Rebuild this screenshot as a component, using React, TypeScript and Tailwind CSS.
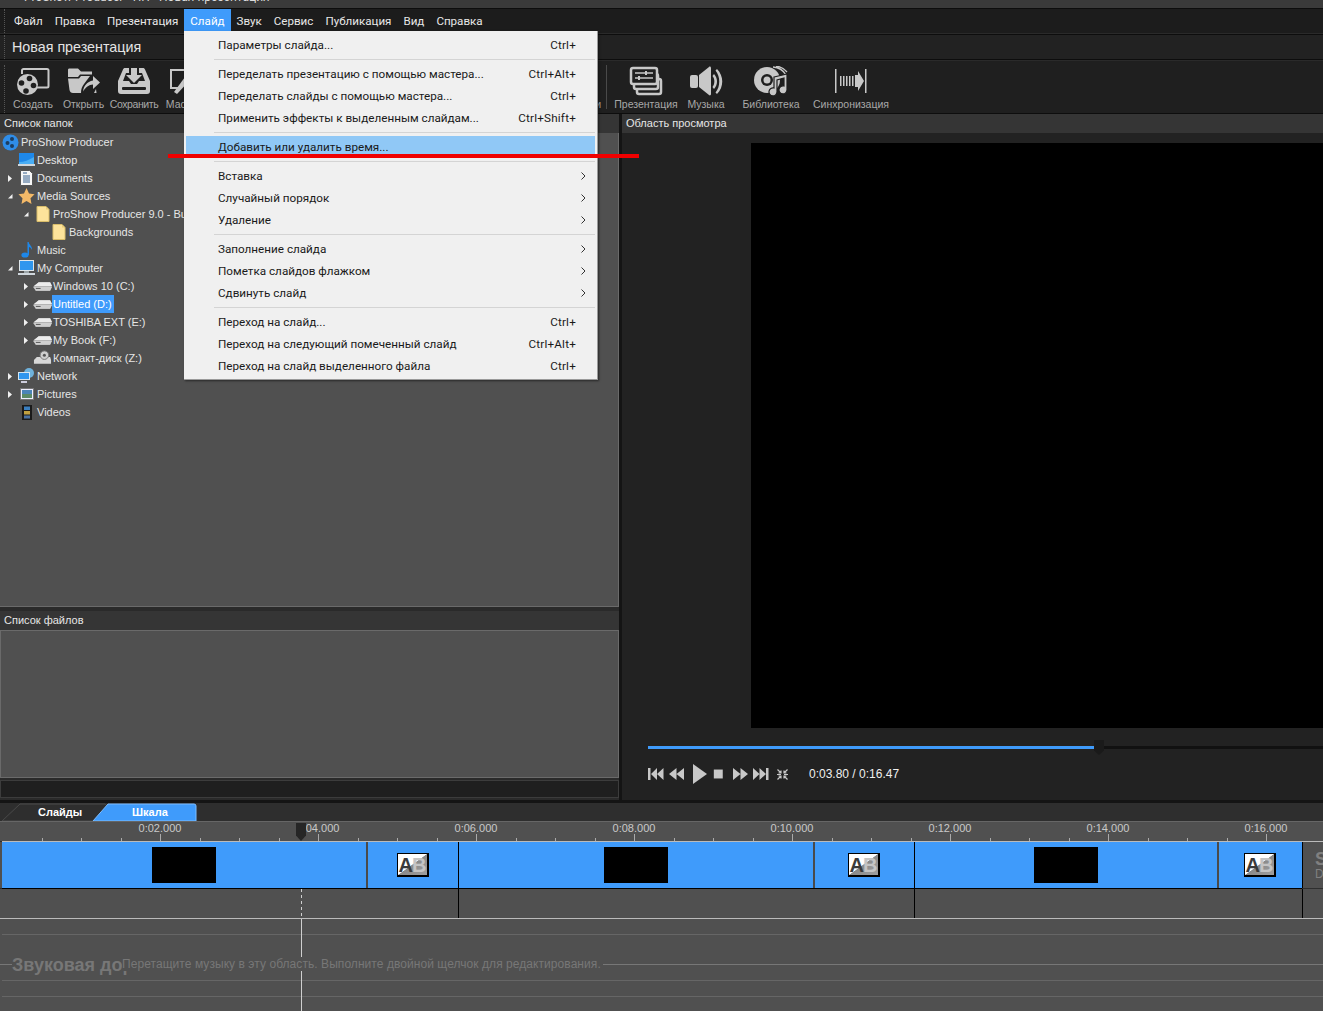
import React from "react";

const SANS = "font-['Liberation_Sans',Arial,sans-serif]";
const UI = "font-['Roboto',sans-serif]";

function Grip() {
  return <div className="ml-[4px] h-full w-[3px] shrink-0 border-l border-dotted border-[#555]" />;
}

const menuTop = ["Файл", "Правка", "Презентация", "Слайд", "Звук", "Сервис", "Публикация", "Вид", "Справка"];

type MI = { t: string; k?: string; sub?: boolean; hl?: boolean } | "sep";
const menuItems: MI[] = [
  { t: "Параметры слайда...", k: "Ctrl+" },
  "sep",
  { t: "Переделать презентацию с помощью мастера...", k: "Ctrl+Alt+" },
  { t: "Переделать слайды с помощью мастера...", k: "Ctrl+" },
  { t: "Применить эффекты к выделенным слайдам...", k: "Ctrl+Shift+" },
  "sep",
  { t: "Добавить или удалить время...", hl: true },
  "sep",
  { t: "Вставка", sub: true },
  { t: "Случайный порядок", sub: true },
  { t: "Удаление", sub: true },
  "sep",
  { t: "Заполнение слайда", sub: true },
  { t: "Пометка слайдов флажком", sub: true },
  { t: "Сдвинуть слайд", sub: true },
  "sep",
  { t: "Переход на слайд...", k: "Ctrl+" },
  { t: "Переход на следующий помеченный слайд", k: "Ctrl+Alt+" },
  { t: "Переход на слайд выделенного файла", k: "Ctrl+" },
];

function IconCreate() {
  return (
    <svg width="36" height="30" viewBox="0 0 36 30" fill="none">
      <path d="M7 8V4.500c0-.8.700-1.500 1.500-1.500H32c.8 0 1.500.7 1.500 1.500V20c0 .8-.7 1.500-1.500 1.500H22" stroke="#c8c8c8" strokeWidth="2" />
      <circle cx="12.500" cy="18.500" r="10.500" fill="#c8c8c8" />
      <g fill="#1f1f1f">
        <circle cx="14.500" cy="12.500" r="2.800" />
        <circle cx="18.500" cy="19.500" r="2.800" />
        <circle cx="11" cy="25" r="2.800" />
        <circle cx="6.500" cy="17" r="2.800" />
      </g>
    </svg>
  );
}
function IconOpen() {
  return (
    <svg width="34" height="28" viewBox="0 0 34 28" fill="#c8c8c8">
      <path d="M1 3c0-1 .5-1.500 1.500-1.500H11l3 3h11v3H13L11 10H1z" />
      <path d="M1 11.500h11l2-2.500h9l-6 8c-2 2.500-3 5-3 9H6c-2 0-3-1-3.500-3z" />
      <path d="M16 24.500c.5-5 4-10 10-11V9l7 6.500-7 6.500v-4.500c-4 0-7.500 3-10 7z" />
      <path d="M19 26h8l2-4 .5 4z" />
    </svg>
  );
}
function IconSave() {
  return (
    <svg width="32" height="28" viewBox="0 0 32 28" fill="#c8c8c8">
      <path d="M7 1h4v5H8L5 14h6l2 3h6l2-3h6l-3-8h-3V1h4c1 0 1.500.5 2 1.500L32 14v10c0 2-1 3-3 3H3c-2 0-3-1-3-3V14l5-11.500C5.500 1.500 6 1 7 1z" />
      <path d="M13 1h6v7h5l-8 8-8-8h5z" />
      <rect x="4" y="20" width="24" height="3" rx="1" fill="#1f1f1f" />
    </svg>
  );
}
function IconMaster() {
  return (
    <svg width="32" height="28" viewBox="0 0 32 28" fill="none">
      <path d="M10 21H3V3h24v5" stroke="#c8c8c8" strokeWidth="2" />
      <path d="M9 27l-3-2 11-15 5 3z" fill="#c8c8c8" />
      <path d="M18 8l3-5 5 3-3 5z" fill="#c8c8c8" />
    </svg>
  );
}
function IconShow() {
  return (
    <svg width="34" height="30" viewBox="0 0 34 30" fill="none" stroke="#c8c8c8" strokeWidth="2">
      <rect x="8" y="13" width="24" height="15" rx="2" strokeWidth="2.5" />
      <rect x="5" y="8" width="24" height="15" rx="2" fill="#1f1f1f" strokeWidth="2.5" />
      <rect x="2" y="2" width="26" height="16" rx="2" fill="#1f1f1f" strokeWidth="2.5" />
      <path d="M6 7h18M6 12h18" strokeWidth="1.5" />
      <path d="M17 5v4M10 10v4" strokeWidth="2" />
    </svg>
  );
}
function IconMusic() {
  return (
    <svg width="34" height="30" viewBox="0 0 34 30" fill="#c8c8c8">
      <rect x="1" y="9" width="8" height="13" rx="2" />
      <path d="M10 9l10-8c1-1 2 0 2 1v26c0 1-1 2-2 1l-10-8z" />
      <path d="M25 8c4 4 4 11 0 15l-1.500-2c2.500-3 2.500-8 0-11z" />
      <path d="M28 3c7 7 7 18 0 25l-1.500-1.500c5-6 5-16 0-22z" />
    </svg>
  );
}
function IconLib() {
  return (
    <svg width="34" height="30" viewBox="0 0 34 30">
      <circle cx="13" cy="14" r="13" fill="#c8c8c8" />
      <circle cx="13" cy="14" r="6" fill="#1f1f1f" />
      <circle cx="13" cy="14" r="3.500" fill="#c8c8c8" />
      <path d="M19 1a16 16 0 0 1 13 8M22 0a17 17 0 0 1 11 6" stroke="#c8c8c8" strokeWidth="1.300" fill="none" />
      <path d="M20 11l13-3v16a4 4 0 1 1-3-4v-8l-7 2v12a4 4 0 1 1-3-4z" fill="#c8c8c8" stroke="#1f1f1f" strokeWidth="1.200" />
    </svg>
  );
}
function IconSync() {
  return (
    <svg width="34" height="28" viewBox="0 0 34 28" fill="#c8c8c8">
      <rect x="1" y="2" width="1.500" height="24" />
      <rect x="31" y="2" width="1.500" height="24" />
      <path d="M6 9h1.500v10H6zM9 9h1.500v10H9zM12 9h1.500v10H12zM15 9h1.500v10H15zM18 9h1.500v10H18z" />
      <path d="M21 8h3V4l6 10-6 10v-4h-3z" />
    </svg>
  );
}

function Tool({ w, label, tight, children }: { w: string; label: string; tight?: boolean; children: React.ReactNode }) {
  return (
    <div className={`${w} shrink-0 flex flex-col items-center`}>
      <div className="h-[32px] flex items-center justify-center">{children}</div>
      <div className={`${SANS} text-[10.5px] leading-[14px] text-[#a8a8a8] whitespace-nowrap ${tight ? "tracking-[-0.4px]" : ""}`}>{label}</div>
    </div>
  );
}

function Folder() {
  return (
    <svg width="14" height="16" viewBox="0 0 14 16">
      <path d="M1 .5h9l3 3v12H1z" fill="#fde39b" stroke="#d9bd6a" />
      <path d="M10 .5v3h3" fill="#e8cc78" />
    </svg>
  );
}
function Drive() {
  return (
    <svg width="20" height="11" viewBox="0 0 20 11">
      <path d="M0 6L6 1h12l2 4-2 5H3z" fill="#b4b4b4" />
      <path d="M6 1h12l2 4H1z" fill="#ececec" />
      <path d="M1 6h19l-2 4H3z" fill="#cfcfcf" />
      <rect x="3" y="7" width="5" height="1" fill="#555" />
    </svg>
  );
}

const TreeIcons: Record<string, React.ReactNode> = {
  logo: (
    <svg width="17" height="17" viewBox="0 0 17 17">
      <circle cx="8.500" cy="8.500" r="8" fill="#2f8de8" />
      <circle cx="10" cy="5" r="2" fill="#1c3d60" />
      <circle cx="5.500" cy="9" r="2" fill="#1c3d60" />
      <circle cx="10" cy="12" r="2" fill="#1c3d60" />
    </svg>
  ),
  desktop: (
    <svg width="17" height="14" viewBox="0 0 17 14">
      <rect x="1" y="0" width="15" height="11" fill="#1e88ea" />
      <rect x="0" y="11" width="17" height="2" fill="#cfd6dc" />
      <path d="M1 9c5 0 10-2 15-5v7H1z" fill="#49aef5" />
    </svg>
  ),
  doc: (
    <svg width="13" height="16" viewBox="0 0 13 16">
      <path d="M.5.500h9l3 3v12H.500z" fill="#f7f7f7" stroke="#555" />
      <path d="M3 3h4M3 6h7M3 8h7M3 10h7M3 12h7" stroke="#36608e" />
    </svg>
  ),
  star: (
    <svg width="17" height="16" viewBox="0 0 17 16">
      <path d="M8.500 0l2.500 5.500 5.500.700-4 4 1 5.800-5-3-5 3 1-5.800-4-4 5.500-.700z" fill="#f3b968" />
    </svg>
  ),
  note: (
    <svg width="12" height="16" viewBox="0 0 12 16">
      <ellipse cx="4" cy="13" rx="3.600" ry="2.600" fill="#1e88ea" />
      <path d="M6.500 13V0h1.200c.3 3 3.800 4 3.300 8-.6-2-2.500-3-3-3v8z" fill="#1e88ea" />
    </svg>
  ),
  pc: (
    <svg width="17" height="16" viewBox="0 0 17 16">
      <rect x="1" y="0" width="15" height="11" fill="#dfe6ea" />
      <rect x="2" y="1" width="13" height="9" fill="#2f96ee" />
      <rect x="6" y="11" width="5" height="2" fill="#9ba4a8" />
      <rect x="0" y="13" width="17" height="2" fill="#cfd6dc" />
    </svg>
  ),
  cd: (
    <svg width="20" height="16" viewBox="0 0 20 16">
      <path d="M1 10l3-3h14l1 3v4H1z" fill="#d8d8d8" />
      <circle cx="12" cy="5" r="4.500" fill="#cfcfcf" stroke="#777" />
      <circle cx="12" cy="5" r="1.600" fill="#555" />
    </svg>
  ),
  net: (
    <svg width="17" height="16" viewBox="0 0 17 16">
      <circle cx="11" cy="5" r="5" fill="#6fb2dc" />
      <rect x="0" y="4" width="12" height="8" fill="#d6e6f0" />
      <rect x="1" y="5" width="10" height="6" fill="#2f96ee" />
      <rect x="3" y="13" width="6" height="2" fill="#ccd" />
    </svg>
  ),
  pic: (
    <svg width="14" height="12" viewBox="0 0 14 12">
      <rect x=".5" y=".5" width="13" height="11" fill="#eef" stroke="#777" />
      <rect x="2" y="2" width="10" height="4" fill="#4b84b8" />
      <rect x="2" y="6" width="10" height="4" fill="#5c8a68" />
    </svg>
  ),
  vid: (
    <svg width="10" height="15" viewBox="0 0 10 15">
      <rect width="10" height="15" fill="#1a1a1a" />
      <rect x="2" y="1.500" width="6" height="3.500" fill="#3a7fc0" />
      <rect x="2" y="6" width="6" height="3.500" fill="#c0a040" />
      <rect x="2" y="10.500" width="6" height="3" fill="#4a70a0" />
    </svg>
  ),
};

type Row = { d: number; a?: "r" | "d"; i: React.ReactNode; t: string; sel?: boolean };
const tree: Row[] = [
  { d: 0, i: TreeIcons.desktop, t: "Desktop" },
  { d: 0, a: "r", i: TreeIcons.doc, t: "Documents" },
  { d: 0, a: "d", i: TreeIcons.star, t: "Media Sources" },
  { d: 1, a: "d", i: <Folder />, t: "ProShow Producer 9.0 - Build 3797" },
  { d: 2, i: <Folder />, t: "Backgrounds" },
  { d: 0, i: TreeIcons.note, t: "Music" },
  { d: 0, a: "d", i: TreeIcons.pc, t: "My Computer" },
  { d: 1, a: "r", i: <Drive />, t: "Windows 10 (C:)" },
  { d: 1, a: "r", i: <Drive />, t: "Untitled (D:)", sel: true },
  { d: 1, a: "r", i: <Drive />, t: "TOSHIBA EXT (E:)" },
  { d: 1, a: "r", i: <Drive />, t: "My Book (F:)" },
  { d: 1, i: TreeIcons.cd, t: "Компакт-диск (Z:)" },
  { d: 0, a: "r", i: TreeIcons.net, t: "Network" },
  { d: 0, a: "r", i: TreeIcons.pic, t: "Pictures" },
  { d: 0, i: TreeIcons.vid, t: "Videos" },
];

function Arrow({ a }: { a?: "r" | "d" }) {
  return (
    <div className="w-[9px] h-[18px] flex items-center justify-start shrink-0">
      {a === "r" && (
        <svg width="5" height="7" viewBox="0 0 5 7"><path d="M0 0l4 3.500L0 7z" fill="#f0f0f0" /></svg>
      )}
      {a === "d" && (
        <svg width="5" height="5" viewBox="0 0 5 5"><path d="M4.500 0v4.500H0z" fill="#f0f0f0" /></svg>
      )}
    </div>
  );
}

function TreeRow({ r }: { r: Row }) {
  const ml = r.d === 0 ? "pl-[8px]" : r.d === 1 ? "pl-[24px]" : "pl-[32px]";
  const iconBox = r.d === 2 ? "ml-[8px]" : "";
  return (
    <div className={`h-[18px] flex items-center ${ml}`}>
      <Arrow a={r.a} />
      <div className={`w-[19px] h-[18px] flex items-center justify-center shrink-0 ${iconBox}`}>{r.i}</div>
      <div className={`h-[18px] leading-[18px] px-[1px] whitespace-nowrap ${r.sel ? "bg-[#3f9bfb] pr-[2px] text-white" : "text-[#e6e6e6]"}`}>{r.t}</div>
    </div>
  );
}

function Ctl({ d, w = 16 }: { d: string; w?: number }) {
  return (
    <svg width={w} height="16" viewBox="0 0 16 16" fill="#c8c8c8"><path d={d} /></svg>
  );
}

function AB() {
  return (
    <div className="w-[32px] h-[24px] border border-black border-r-2 border-b-2 relative overflow-hidden bg-[linear-gradient(to_bottom_right,#ffffff_0%,#ffffff_49%,#8a8a8a_51%,#a0a0a0_100%)] flex items-center justify-center">
      <span className={`${SANS} font-bold text-[20px] leading-none text-[#3a3a3a]`}>A</span>
      <span className={`${SANS} font-bold text-[20px] leading-none ml-[-1px] text-[#c4c4c4]`}>B</span>
    </div>
  );
}

function Slide({ w, th, tr, trBox }: { w: string; th: string; tr: string; trBox: string }) {
  return (
    <>
      <div className={`${w} h-full shrink-0 flex items-center bg-[#3f9bfb] ${th}`}>
        <div className="w-[64px] h-[36px] bg-black" />
      </div>
      <div className="w-[2px] h-full bg-[#4a4a4a] shrink-0" />
      <div className={`${tr} h-full shrink-0 flex items-center bg-[#3f9bfb] ${trBox}`}>
        <AB />
      </div>
    </>
  );
}

const tickXs = Array.from({ length: 33 }, (_, i) => 2.5 + i * 39.5).slice(1);

export default function App() {
  return (
    <div className={`relative w-[1323px] h-[1011px] overflow-hidden bg-[#2a2a2a] ${SANS} text-[11px]`}>
      {/* title */}
      <div className="h-[8px] bg-[#3a3a3a] overflow-hidden relative">
        <div className={`${UI} absolute left-[24px] top-[-12px] text-[12px] leading-[18px] text-[#dcdcdc] whitespace-nowrap`}>ProShow Producer - ПП - Новая презентация</div>
      </div>
      {/* menu */}
      <div className="h-[25px] bg-[#1c1c1c] flex items-stretch border-t border-[#0d0d0d]">
        <Grip />
        <div className={`${UI} flex pl-[1px] text-[11.6px] leading-[24px] text-[#e8e8e8]`}>
          {menuTop.map((m) => (
            <div key={m} className={`px-[6px] h-[24px] ${m === "Слайд" ? "bg-[#3f9bfb] text-white" : ""}`}>{m}</div>
          ))}
        </div>
      </div>
      {/* name bar */}
      <div className="h-[26px] mt-[1px] bg-[#222222] border-y border-[#0d0d0d] flex items-center">
        <Grip />
        <div className="ml-[5px] pt-[1px] text-[14.3px] text-[#e4e4e4]">Новая презентация</div>
      </div>
      {/* toolbar */}
      <div className="h-[53px] mt-[1px] bg-[#1f1f1f] border-b border-[#0d0d0d] flex items-start pt-[4px] overflow-hidden">
        <Grip />
        <div className="ml-[1px] flex">
          <Tool w="w-[50px]" label="Создать"><IconCreate /></Tool>
          <Tool w="w-[51px]" label="Открыть"><IconOpen /></Tool>
          <Tool w="w-[50px]" label="Сохранить" tight><IconSave /></Tool>
          <Tool w="w-[50px]" label="Мастер"><IconMaster /></Tool>
        </div>
        <div className="flex-1 h-[46px] flex items-end justify-end pr-[5px]">
          <div className="text-[10.5px] leading-[14px] text-[#a8a8a8]">и</div>
        </div>
        <div className="w-px h-[44px] bg-[#4a4a4a] shrink-0" />
        <div className="flex w-[716px] pl-[5px] shrink-0">
          <Tool w="w-[68px]" label="Презентация"><IconShow /></Tool>
          <Tool w="w-[52px]" label="Музыка"><IconMusic /></Tool>
          <Tool w="w-[78px]" label="Библиотека"><IconLib /></Tool>
          <Tool w="w-[82px]" label="Синхронизация"><IconSync /></Tool>
        </div>
      </div>
      {/* main */}
      <div className="h-[686px] flex bg-[#2a2a2a]">
        <div className="w-[619px] shrink-0 flex flex-col">
          <div className="h-[19px] bg-[#353535] pl-[4px] leading-[19px] text-[#e6e6e6]">Список папок</div>
          <div className="h-[474px] bg-[#505050] border-r border-b border-[#6a6a6a] overflow-hidden">
            <div className="h-[18px] flex items-center pl-[2px]">
              <div className="w-[17px] h-[17px] flex shrink-0">{TreeIcons.logo}</div>
              <div className="ml-[2px] text-[#e6e6e6]">ProShow Producer</div>
            </div>
            {tree.map((r) => <TreeRow key={r.t} r={r} />)}
          </div>
          <div className="h-[4px]" />
          <div className="h-[19px] bg-[#353535] pl-[4px] leading-[18px] text-[#e6e6e6]">Список файлов</div>
          <div className="h-[148px] bg-[#505050] border border-[#6a6a6a]" />
          <div className="h-[2px]" />
          <div className="h-[18px] bg-[#1f1f1f] border border-[#3c3c3c]" />
        </div>
        <div className="w-[3px] shrink-0 bg-[#141414]" />
        <div className="flex-1 flex flex-col bg-[#222222] overflow-hidden">
          <div className="h-[19px] bg-[#353535] pl-[4px] leading-[19px] text-[#e6e6e6]">Область просмотра</div>
          <div className="h-[585px] mt-[10px] ml-[129px] mr-0 bg-black shrink-0" />
          <div className="relative mt-[18px] ml-[26px] h-[3px] bg-[#111]">
            <div className="h-[3px] w-[447px] bg-[#3f9bfb]" />
            <div className="absolute left-[446px] top-[-6px] w-[10px] h-[15px] bg-[#1a1a1a] [clip-path:polygon(0_0,100%_0,100%_70%,50%_100%,0_70%)]" />
          </div>
          <div className="mt-[15px] ml-[26px] h-[20px] flex items-center">
            <Ctl d="M0 2h2.500v12H0zM3 8l6-6v12zM9 8l6.500-6v12z" />
            <div className="w-[5px]" />
            <Ctl d="M0 8l7.500-6v12zM7.500 8L15 2v12z" />
            <div className="w-[7px]" />
            <svg width="16" height="20" viewBox="0 0 16 20" fill="#c8c8c8"><path d="M1 0l14 10L1 20z" /></svg>
            <div className="w-[5px]" />
            <Ctl d="M1 2.500h11v11H1z" w={13} />
            <div className="w-[7px]" />
            <Ctl d="M0 2l7.500 6L0 14zM7.500 2L15 8l-7.500 6z" />
            <div className="w-[4px]" />
            <Ctl d="M0 2l6.500 6L0 14zM6.500 2L13 8l-6.500 6zM13 2h2.500v12H13z" />
            <div className="w-[8px]" />
            <svg width="11" height="11" viewBox="0 0 11 11" fill="none" stroke="#c8c8c8" strokeWidth="1.200">
              <path d="M.5.5L4 4M4 1.500V4H1.500M10.500.5L7 4M7 1.500V4h2.500M.5 10.500L4 7M4 9.500V7H1.500M10.500 10.500L7 7M7 9.500V7h2.500M0 5.500h4M7 5.500h4" />
            </svg>
            <div className={`${SANS} ml-[21px] text-[12px] text-[#f0f0f0]`}>0:03.80 / 0:16.47</div>
          </div>
        </div>
      </div>
      {/* timeline */}
      <div className="h-[212px] bg-[#2e2e2e] relative overflow-hidden">
        <div className="h-[3px] bg-[#141414]" />
        <div className="relative h-[18px]">
          <svg className="absolute left-0 top-0" width="200" height="18" viewBox="0 0 200 18">
            <path d="M2 18 L20 1 H105 L110 5 L95 18z" fill="#2e2e2e" stroke="#4a4a4a" />
            <path d="M93 18 L108 1 H194 Q196 1 196 3 V18z" fill="#3f9bfb" stroke="#7cbcff" />
          </svg>
          <div className="relative flex h-[18px] font-bold text-[11px] leading-[18px] text-white">
            <div className="w-[120px] pl-[38px]">Слайды</div>
            <div className="pl-[12px]">Шкала</div>
          </div>
        </div>
        <div className="h-[20px] bg-[#505050] border-t border-[#666] relative">
          <div className="flex pl-[81px] text-[11px] leading-[13px] text-[#c9c9c9]">
            {["0:02.000", "0:04.000", "0:06.000", "0:08.000", "0:10.000", "0:12.000", "0:14.000", "0:16.000"].map((l) => (
              <div key={l} className="w-[158px] shrink-0 text-center">{l}</div>
            ))}
          </div>
          <svg className="absolute left-0 bottom-0" width="1323" height="7" viewBox="0 0 1323 7">
            {tickXs.map((x, i) => (
              <rect key={i} x={Math.round(x - 0.5)} y={i % 4 === 3 ? 0 : 4} width="1" height={i % 4 === 3 ? 7 : 3} fill="#aaaaaa" />
            ))}
          </svg>
        </div>
        <div className="h-[1px] bg-[#bbbbbb] ml-[2px]" />
        <div className="h-[46px] bg-[#505050] flex pl-[2px]">
          <Slide w="w-[364px]" th="pl-[150px]" tr="w-[90px]" trBox="pl-[29px]" />
          <div className="w-px h-full bg-black shrink-0" />
          <Slide w="w-[354px]" th="pl-[145px]" tr="w-[99px]" trBox="pl-[33px]" />
          <div className="w-px h-full bg-black shrink-0" />
          <Slide w="w-[302px]" th="pl-[119px]" tr="w-[83px]" trBox="pl-[25px]" />
          <div className="w-px h-full bg-black shrink-0" />
          <div className="overflow-hidden pl-[12px] pt-[8px] text-[#808080] whitespace-nowrap">
            <div className="font-bold text-[18px] leading-[18px]">S</div>
            <div className="text-[12px] leading-[13px]">D</div>
          </div>
        </div>
        <div className="h-px bg-black ml-[2px] w-[1300px]" />
        <div className="h-[30px] bg-[#505050] flex pl-[2px] border-b border-[#bbbbbb]">
          <div className="w-[457px] border-r border-black" />
          <div className="w-[456px] border-r border-black" />
          <div className="w-[388px] border-r border-black" />
        </div>
        <div className="h-[92px] bg-[#505050] relative flex flex-col pl-[2px]">
          <div className="h-[16px] border-b border-[#666]" />
          <div className="h-[30px]" />
          <div className="h-[16px] border-b border-[#666]" />
          <div className="h-[16px] border-b border-[#666]" />
        </div>
        {/* playhead */}
        <div className="absolute left-[296px] top-[23px] w-[10px] h-[18px] bg-[#262626] [clip-path:polygon(0_0,100%_0,100%_70%,50%_100%,0_70%)]" />
        <svg className="absolute left-[301px] top-[89px]" width="1" height="123" viewBox="0 0 1 123">
          <path d="M.5 0v30" stroke="#cfcfcf" strokeDasharray="3 3" />
          <path d="M.5 30v93" stroke="#cfcfcf" />
        </svg>
        {/* audio hint, over the playhead line */}
        <div className="absolute left-0 right-0 top-[149px] flex items-center h-[30px]">
          <div className="w-[12px] h-px bg-[#777] shrink-0" />
          <div className="w-[110px] shrink-0 relative h-[30px]">
            <div className="font-bold text-[18px] leading-[32px] text-[#777] whitespace-nowrap">Звуковая дорожка</div>
          </div>
          <div className="relative h-[14px] leading-[15px] bg-[#505050] text-[12px] tracking-[0.06px] text-[#777] whitespace-nowrap">Перетащите музыку в эту область. Выполните двойной щелчок для редактирования.</div>
          <div className="flex-1 h-px bg-[#777] ml-[2px]" />
        </div>
      </div>

      {/* dropdown menu */}
      <div className={`${UI} absolute left-[184px] top-[31px] w-[414px] h-[349px] bg-[#f0f0f0] border-r border-b border-[#9a9a9a] shadow-[1px_1px_2px_rgba(0,0,0,0.5)] py-[3px] pl-[2px] pr-[2px] text-[11.7px] text-[#1a1a1a]`}>
        {menuItems.map((m, i) =>
          m === "sep" ? (
            <div key={i} className="h-[7px] flex items-center pl-[28px]"><div className="h-px w-full bg-[#d4d4d4]" /></div>
          ) : (
            <div key={i} className={`h-[22px] flex items-center pl-[32px] pr-[19px] pt-[1px] relative ${m.hl ? "bg-[#90c8f6]" : ""}`}>
              <span className="flex-1 whitespace-nowrap">{m.t}</span>
              {m.k && <span className="tracking-[0.2px]">{m.k}</span>}
              {m.sub && (
                <svg className="absolute right-[9px] top-[7px]" width="5" height="8" viewBox="0 0 5 8" fill="none" stroke="#333"><path d="M.500.500L4 4 .500 7.500" /></svg>
              )}
            </div>
          )
        )}
      </div>
      {/* red annotation line */}
      <div className="absolute left-[168px] top-[154px] w-[471px] h-[4px] bg-[#f00000]" />
    </div>
  );
}
